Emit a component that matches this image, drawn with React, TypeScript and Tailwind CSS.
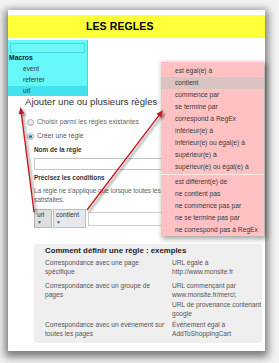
import React from "react";

const pinkItems1 = [
  "est égal(e) à",
  "contient",
  "commence par",
  "se termine par",
  "correspond à RegEx",
  "inférieur(e) à",
  "inférieur(e) ou égal(e) à",
  "supérieur(e) à",
  "supérieur(e) ou égal(e) à",
];
const pinkItems2 = [
  "est différent(e) de",
  "ne contient pas",
  "ne commence pas par",
  "ne se termine pas par",
  "ne correspond pas à RegEx",
];

function Radio({ checked }: { checked?: boolean }) {
  return (
    <span className="w-[7px] h-[7px] rounded-full border border-[#a9a9a9] bg-gradient-to-b from-[#f4f4f4] to-[#dcdcdc] flex items-center justify-center shrink-0">
      {checked ? <span className="w-[3px] h-[3px] rounded-full bg-[#2463c9]" /> : null}
    </span>
  );
}

export default function App() {
  return (
    <div className="relative w-[279px] h-[363px] overflow-hidden bg-[#f3f3f3] pt-[10px] pl-[8px] font-['Liberation_Sans',Arial,sans-serif]">
      {/* page */}
      <div className="w-[257px] h-[341px] bg-white shadow-[0_3px_8px_3px_rgba(0,0,0,0.5)] pt-[5px] overflow-hidden">
        <div className="h-[23px] bg-[#ffff3a] pl-[78px] flex items-center">
          <span className="text-[10.5px] font-bold text-black leading-none tracking-[0.1px]">LES REGLES</span>
        </div>

        {/* macros panel */}
        <div className="mt-[2px] w-[80px] h-[56px] bg-[#66f8f8] border-r border-[#40d8de] flex flex-col">
          <div className="mx-[2px] mt-[3px] h-[10px] border border-[#45dde2] bg-[#6cf6f6]" />
          <div className="h-[10px] pl-[1px] flex items-center text-[6.8px] font-bold text-[#222]">Macros</div>
          <div className="h-[11px] pl-[15px] flex items-center text-[6.6px] text-[#333]">event</div>
          <div className="h-[12px] pl-[15px] flex items-center text-[6.6px] text-[#333]">referrer</div>
          <div className="h-[10px] pl-[15px] flex items-center text-[6.6px] text-[#333] bg-[#42e3ee]">url</div>
        </div>

        {/* form */}
        <div className="h-[12px] pl-[17px] flex items-center text-[9.6px] text-[#333] whitespace-nowrap">
          Ajouter une ou plusieurs règles
        </div>

        <div className="mt-[9px] h-[10px] pl-[19px] flex items-center gap-[3px] text-[6.7px] text-[#666] whitespace-nowrap">
          <Radio />
          <span>Choisir parmi les règles existantes</span>
        </div>
        <div className="mt-[4px] h-[10px] pl-[19px] flex items-center gap-[3px] text-[6.7px] text-[#555] whitespace-nowrap">
          <Radio checked />
          <span>Créer une règle</span>
        </div>

        <div className="mt-[4px] h-[10px] pl-[26px] flex items-center text-[6.4px] font-bold text-[#333] whitespace-nowrap">
          Nom de la règle
        </div>
        <div className="mt-[3px] ml-[26px] w-[190px] h-[12px] border border-[#c4c4c4] bg-white" />

        <div className="mt-[3px] h-[10px] pl-[26px] flex items-center text-[6.4px] font-bold text-[#333] whitespace-nowrap">
          Précisez les conditions
        </div>
        <div className="mt-[3px] pl-[26px] text-[6.7px] leading-[9px] tracking-[-0.13px] text-[#666] whitespace-nowrap">
          La règle ne s'applique que lorsque toutes les
          <br />
          satisfaites.
        </div>

        <div className="mt-[5px] pl-[26px] flex items-start gap-[1px]">
          <div className="w-[18px] h-[19px] border border-[#b5b5b5] bg-[#dedede] flex flex-col pl-[2px] pt-[1px] text-[6.6px] leading-[8px] text-[#333]">
            <span>url</span>
            <span className="text-[5px] leading-[7px] text-[#555]">▼</span>
          </div>
          <div className="w-[33px] h-[19px] border border-[#a8c4e2] bg-[#e6e8ec] flex flex-col pl-[2px] pt-[1px] text-[6.6px] leading-[8px] text-[#333]">
            <span>contient</span>
            <span className="text-[5px] leading-[7px] text-[#555]">▼</span>
          </div>
          <div className="mt-[3px] ml-[1px] w-[120px] h-[14px] border border-[#cfcfcf] bg-white" />
        </div>

        {/* examples box */}
        <div className="mt-[16px] ml-[26px] w-[228px] h-[99px] bg-[#efefef] rounded-[2px] pt-[1px] pl-[11px]">
          <div className="h-[11px] flex items-center text-[7.8px] font-bold text-[#222] whitespace-nowrap">
            Comment définir une règle : exemples
          </div>
          <div className="mt-[1.5px] flex text-[6.6px] leading-[9.5px] text-[#555] whitespace-nowrap">
            <div className="w-[127px]">
              Correspondance avec une page
              <br />
              spécifique
            </div>
            <div>
              URL égale à
              <br />
              http://www.monsite.fr
            </div>
          </div>
          <div className="mt-[4px] flex text-[6.6px] leading-[9.5px] text-[#555] whitespace-nowrap">
            <div className="w-[127px]">
              Correspondance avec un groupe de
              <br />
              pages
            </div>
            <div>
              URL commençant par
              <br />
              www.monsite.fr/merci;
              <br />
              URL de provenance contenant
              <br />
              google
            </div>
          </div>
          <div className="mt-[1px] flex text-[6.6px] leading-[9.5px] text-[#555] whitespace-nowrap">
            <div className="w-[127px]">
              Correspondance avec un événement sur
              <br />
              toutes les pages
            </div>
            <div>
              Événement égal à
              <br />
              AddToShoppingCart
            </div>
          </div>
        </div>
      </div>

      {/* operators dropdown (overlay) */}
      <div className="absolute left-[161px] top-[62px] w-[103px] h-[174px] bg-[#ffc1c1] pt-[3px] shadow-[2px_2px_5px_1px_rgba(0,0,0,0.35)] text-[6.7px] text-[#3a3a3a]">
        {pinkItems1.map((t, i) => (
          <div
            key={t}
            className={
              i === 1
                ? "h-[12px] pl-[14px] flex items-center whitespace-nowrap bg-[#d9c3c3]"
                : "h-[12px] pl-[14px] flex items-center whitespace-nowrap"
            }
          >
            {t}
          </div>
        ))}
        <div className="h-[3px] flex items-center">
          <div className="w-full h-[1px] bg-[#ffe6e6]" />
        </div>
        {pinkItems2.map((t) => (
          <div key={t} className="h-[12px] pl-[14px] flex items-center whitespace-nowrap">
            {t}
          </div>
        ))}
      </div>

      {/* arrows (overlay) */}
      <svg className="absolute left-0 top-0 pointer-events-none" width="279" height="363" viewBox="0 0 279 363">
        <defs>
          <filter id="blur" x="-20%" y="-20%" width="140%" height="140%">
            <feGaussianBlur stdDeviation="0.9" />
          </filter>
        </defs>
        <g filter="url(#blur)" opacity="0.45" transform="translate(2 2)">
          <line x1="34" y1="212" x2="21.4" y2="113.9" stroke="#000" strokeWidth="1.4" />
          <polygon points="20.5,107 24.2,113.6 18.6,114.3" fill="#000" />
          <line x1="87" y1="210" x2="158.8" y2="115.6" stroke="#000" strokeWidth="1.4" />
          <polygon points="163,110 161,117.3 156.5,113.9" fill="#000" />
        </g>
        <line x1="34" y1="212" x2="21.4" y2="113.9" stroke="#c8111b" strokeWidth="1.3" />
        <polygon points="20.5,107 24.2,113.6 18.6,114.3" fill="#c8111b" />
        <line x1="87" y1="210" x2="158.8" y2="115.6" stroke="#c8111b" strokeWidth="1.3" />
        <polygon points="163,110 161,117.3 156.5,113.9" fill="#c8111b" />
      </svg>
    </div>
  );
}
